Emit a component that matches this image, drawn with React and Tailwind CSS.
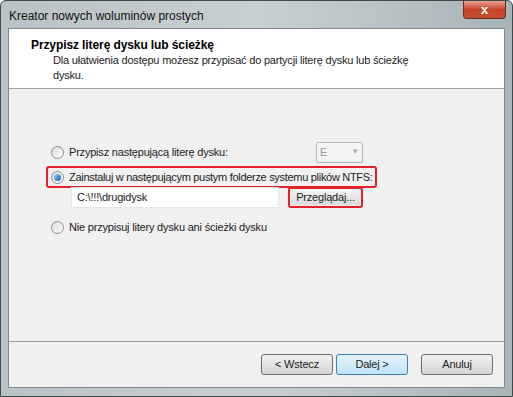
import React from 'react'

const font = { fontFamily: '"Liberation Sans", Arial, sans-serif' }

function Radio({ checked }) {
  return (
    <span className="relative inline-flex h-[13px] w-[13px] shrink-0 items-center justify-center rounded-full border border-[#8e8f8f] bg-gradient-to-br from-[#dcdcdc] to-[#fbfbfb]">
      {checked && <span className="h-[7px] w-[7px] rounded-full bg-gradient-to-br from-[#8ed2ff] to-[#1b57a7]" />}
    </span>
  )
}

function Btn({ children, active }) {
  return (
    <div
      className={
        'flex h-[21px] w-[72px] items-center justify-center rounded-[3px] border text-[11px] tracking-[-0.2px] ' +
        (active
          ? 'border-[#3c7fb1] bg-gradient-to-b from-[#e5f4fc] to-[#bfe3f8] text-[#222]'
          : 'border-[#707070] bg-gradient-to-b from-[#f2f2f2] to-[#d4d4d4] text-[#222]')
      }
    >
      {children}
    </div>
  )
}

export default function App() {
  return (
    <div className="h-[397px] w-[513px] overflow-hidden bg-white" style={font}>
      <div className="flex h-full w-full flex-col rounded-t-[6px] border border-[#3b4a4a] bg-gradient-to-r from-[#b9c2c6] via-[#c9d0d3] to-[#a9b4b8] px-[7px] pb-[8px]">
        <div className="flex h-[27px] shrink-0 items-start justify-between">
          <span className="pl-[1px] pt-[6px] text-[12px] text-[#111]">Kreator nowych woluminów prostych</span>
          <div className="mr-[-1px] flex h-[18px] w-[43px] items-center justify-center rounded-b-[4px] border border-t-0 border-[#6e2a1e] bg-gradient-to-b from-[#e4a08e] via-[#c8442a] to-[#c1502f]">
            <span className="text-[13px] font-bold leading-none text-white">x</span>
          </div>
        </div>
        <div className="flex flex-1 flex-col border border-[#7b8a8e] bg-[#f0f0f0]">
          <div className="h-[60px] shrink-0 border-b border-[#a0a0a0] bg-white pl-[22px] pt-[9px]">
            <div className="text-[12px] font-bold leading-[15px] tracking-[-0.1px] text-[#000]">Przypisz literę dysku lub ścieżkę</div>
            <div className="w-[390px] pl-[22px] text-[11px] leading-[15px] tracking-[-0.2px] text-[#222]">
              Dla ułatwienia dostępu możesz przypisać do partycji literę dysku lub ścieżkę dysku.
            </div>
          </div>
          <div className="flex flex-1 flex-col pl-[42px] pt-[52px] text-[11px] tracking-[-0.2px] text-[#222]">
            <div className="flex h-[22px] items-center">
              <Radio />
              <span className="ml-[5px] w-[247px]">Przypisz następującą literę dysku:</span>
              <div className="flex h-[21px] w-[47px] items-center justify-between rounded-[2px] border border-[#b8b8b8] bg-[#f4f4f4] px-[3px] text-[#999]">
                <span>E</span>
                <span className="text-[8px] text-[#aaa]">▼</span>
              </div>
            </div>
            <div className="ml-[-5px] mt-[3px] flex h-[22px] w-[331px] items-center rounded-[3px] border-2 border-[#e0202a] pl-[3px]">
              <Radio checked />
              <span className="ml-[5px] whitespace-nowrap tracking-[-0.3px]">Zainstaluj w następującym pustym folderze systemu plików NTFS:</span>
            </div>
            <div className="mt-[-1px] flex items-center">
              <div className="ml-[20px] flex h-[21px] w-[208px] items-center border border-[#e6e6e6] bg-white pl-[5px]">C:\!!!\drugidysk</div>
              <div className="ml-[9px] rounded-[3px] border-2 border-[#e0202a] p-[1px]">
                <div className="flex h-[15px] w-[69px] items-center justify-center bg-gradient-to-b from-[#f2f2f2] to-[#dcdcdc]">Przeglądaj...</div>
              </div>
            </div>
            <div className="mt-[10px] flex h-[18px] items-center">
              <Radio />
              <span className="ml-[5px]">Nie przypisuj litery dysku ani ścieżki dysku</span>
            </div>
          </div>
          <div className="flex h-[46px] shrink-0 items-center justify-end border-t border-[#a0a0a0] pr-[11px]">
            <Btn>&lt; Wstecz</Btn>
            <div className="w-[3px]" />
            <Btn active>Dalej &gt;</Btn>
            <div className="w-[13px]" />
            <Btn>Anuluj</Btn>
          </div>
        </div>
      </div>
    </div>
  )
}
